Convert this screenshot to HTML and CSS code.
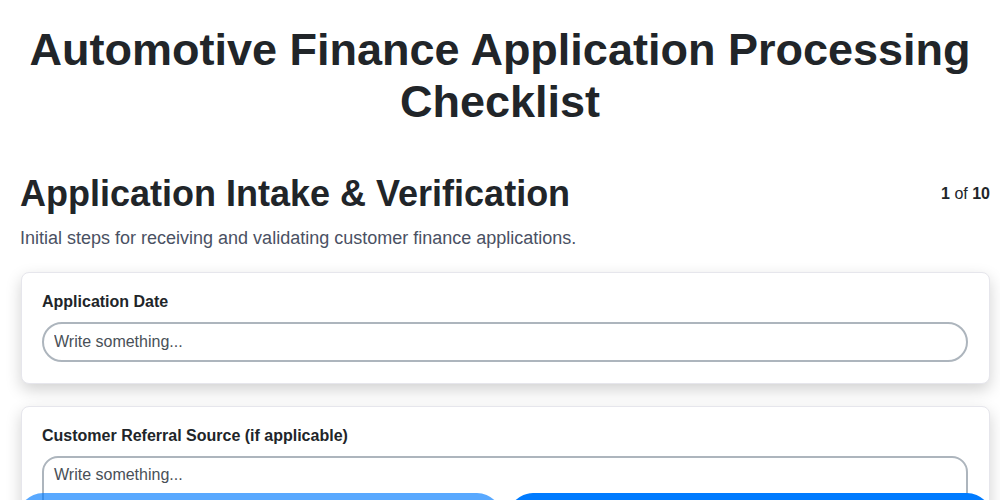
FILE: index.html
```html
<!DOCTYPE html>
<html lang="en">
<head>
<meta charset="utf-8">
<title>Automotive Finance Application Processing Checklist</title>
<link rel="stylesheet" href="styles.css">
</head>
<body>
<h1 class="title">Automotive Finance Application Processing Checklist</h1>
<main class="page">
  <section class="step">
    <header class="step-head">
      <h2 class="step-title">Application Intake &amp; Verification</h2>
      <div class="step-count"><b>1</b> of <b>10</b></div>
    </header>
    <p class="step-desc">Initial steps for receiving and validating customer finance applications.</p>
    <div class="card">
      <label class="field-label" for="f1">Application Date</label>
      <input class="field-input" id="f1" type="text" placeholder="Write something...">
    </div>
    <div class="card">
      <label class="field-label" for="f2">Customer Referral Source (if applicable)</label>
      <textarea class="field-area" id="f2" rows="4" placeholder="Write something..."></textarea>
    </div>
  </section>
</main>
<nav class="nav">
  <button class="btn btn-prev" disabled>Previous</button>
  <button class="btn btn-next">Next</button>
</nav>
</body>
</html>
```
FILE: styles.css
```css
* { box-sizing: border-box; }
html, body { margin: 0; padding: 0; background: #ffffff; }
body {
  font-family: "Liberation Sans", Arial, sans-serif;
  color: #212529;
}
.title {
  margin: 24px 0 42px;
  padding: 0 20px;
  font-size: 45px;
  line-height: 52px;
  font-weight: 700;
  text-align: center;
  color: #212529;
}
.page {
  padding: 0 10px 0 20px;
}
.step-head {
  display: flex;
  justify-content: space-between;
  align-items: flex-start;
}
.step-title {
  margin: 0;
  font-size: 36px;
  line-height: 48px;
  font-weight: 700;
  color: #212529;
}
.step-count {
  font-size: 16px;
  line-height: 24px;
  margin-top: 12px;
}
.step-desc {
  margin: 8px 0 22px;
  font-size: 18px;
  line-height: 24px;
  color: #4a5163;
}
.card {
  display: flex;
  flex-direction: column;
  background: #fff;
  border: 1px solid #e6e6ec;
  border-radius: 8px;
  padding: 19px 21px 21px 20px;
  margin: 0 0 22px 1px;
  box-shadow: 0 6px 16px rgba(0, 0, 0, 0.18);
}
.field-label {
  font-size: 16px;
  font-weight: 700;
  line-height: 20px;
  margin-bottom: 10px;
  color: #212529;
}
.field-input, .field-area {
  font-family: "Liberation Sans", Arial, sans-serif;
  font-size: 16px;
  color: #495057;
  border: 2px solid #adb5bd;
  background: #fff;
  outline: none;
}
.field-input {
  height: 40px;
  border-radius: 20px;
  padding: 0 10px;
}
.field-area {
  border-radius: 16px;
  padding: 8px 10px;
  resize: none;
  height: 100px;
}
.field-input::placeholder, .field-area::placeholder { color: #495057; opacity: 1; }
.nav {
  position: fixed;
  left: 18px;
  right: 8px;
  top: 493px;
  display: flex;
  gap: 6px;
}
.btn {
  flex: 1;
  height: 50px;
  border: none;
  border-radius: 25px;
  background: #007bff;
  color: #fff;
  font-family: "Liberation Sans", Arial, sans-serif;
  font-size: 16px;
}
.btn-prev { opacity: 0.65; }
```
